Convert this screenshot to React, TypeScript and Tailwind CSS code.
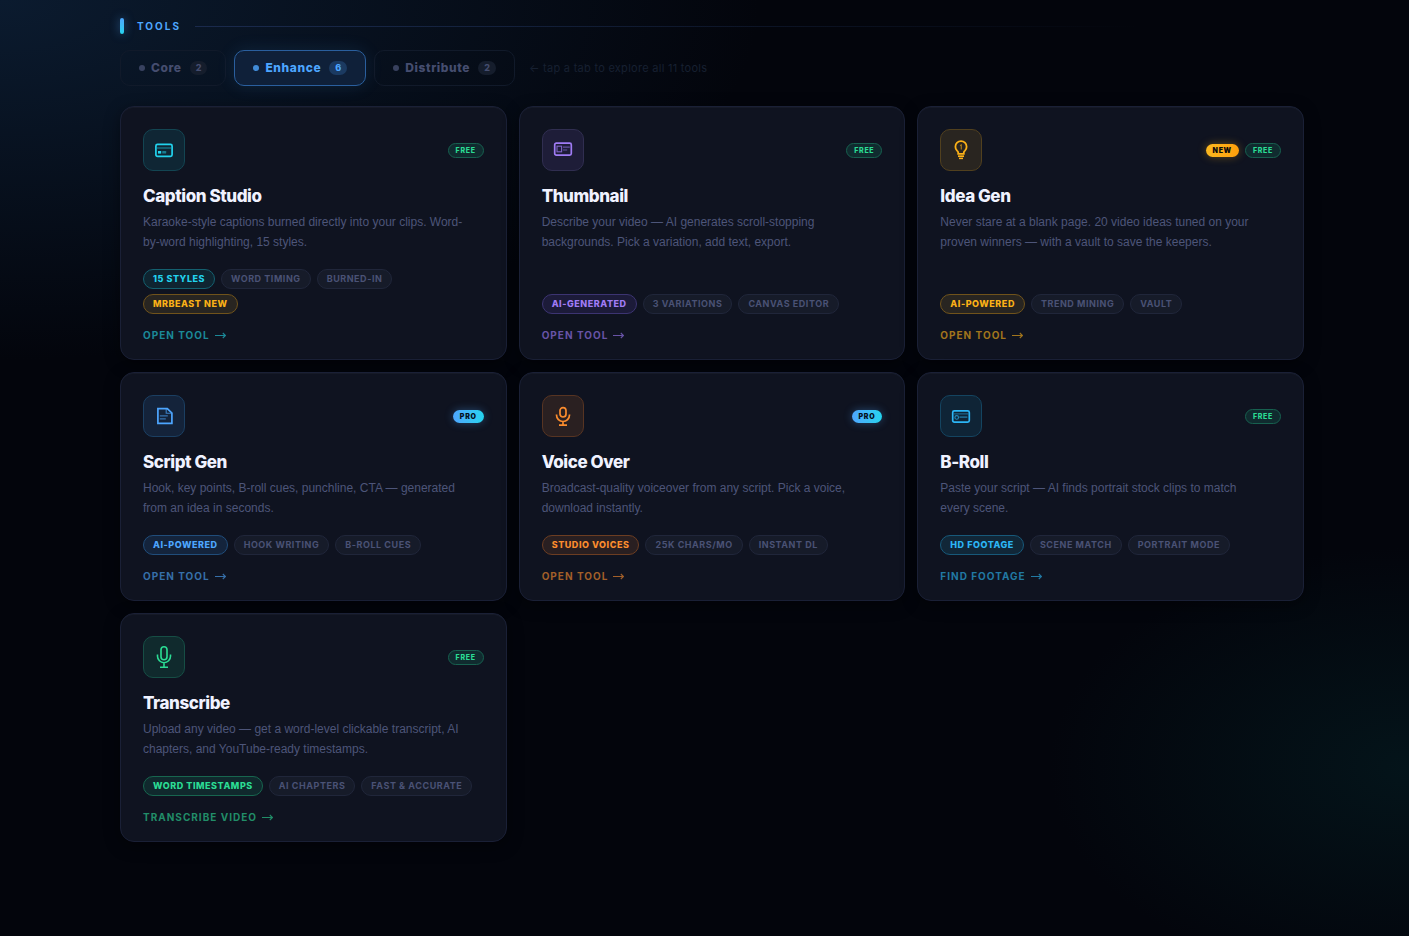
import React, { useState } from 'react';
import clsx from 'clsx';

type Tone = 'cyan' | 'violet' | 'amber' | 'blue' | 'orange' | 'sky' | 'green';
type Badge = 'NEW' | 'FREE' | 'PRO';

interface Tool {
  name: string;
  desc: string;
  tone: Tone;
  badges: Badge[];
  tags: { label: string; tone?: Tone }[];
  cta: string;
  icon: React.ReactNode;
}

const iconTone: Record<Tone, string> = {
  cyan: 'text-[#22d3ee] bg-[#0f2634] border-[#134552]',
  violet: 'text-[#a07cf5] bg-[#1e1d38] border-[#302e50]',
  amber: 'text-[#fbb117] bg-[#292520] border-[#51401e]',
  blue: 'text-[#4da6ff] bg-[#14233a] border-[#1b3f62]',
  orange: 'text-[#fb8c2e] bg-[#2a2021] border-[#573422]',
  sky: 'text-[#2cb5f5] bg-[#0f2436] border-[#144460]',
  green: 'text-[#2bdc94] bg-[#102a2d] border-[#164e45]',
};

const tagTone: Record<Tone, string> = {
  cyan: 'text-[#22d3ee] bg-[#0f2531] border-[#14606f]',
  violet: 'text-[#a07cf5] bg-[#1c1b39] border-[#3c3472]',
  amber: 'text-[#fbb117] bg-[#282521] border-[#70531b]',
  blue: 'text-[#4da6ff] bg-[#14243c] border-[#204d7b]',
  orange: 'text-[#fb8c2e] bg-[#291f21] border-[#6c3d22]',
  sky: 'text-[#2cb5f5] bg-[#112738] border-[#17597a]',
  green: 'text-[#2bdc94] bg-[#10292d] border-[#17664f]',
};

const linkTone: Record<Tone, string> = {
  cyan: 'text-[#1b8998]',
  violet: 'text-[#6853a6]',
  amber: 'text-[#a1751c]',
  blue: 'text-[#366fa9]',
  orange: 'text-[#a25f29]',
  sky: 'text-[#2179a3]',
  green: 'text-[#218d68]',
};

const badgeStyle: Record<Badge, string> = {
  NEW: 'px-[7px] py-[2px] font-black text-[#0a0a0a] bg-gradient-to-r from-[#fbb81f] to-[#ff9f0a] shadow-[0_0_8px_rgba(251,177,23,0.35)]',
  FREE: 'px-[7px] py-[2px] font-extrabold text-[#2bdc94] bg-[#102b2f] border border-[#17604f]',
  PRO: 'px-[7px] py-[2px] font-black text-[#04101c] bg-gradient-to-r from-[#4da6ff] to-[#22d3ee] shadow-[0_0_8px_rgba(77,166,255,0.35)]',
};

const Svg = ({ children }: { children: React.ReactNode }) => (
  <svg width="20" height="24" viewBox="0 0 20 24" fill="none" stroke="currentColor" strokeWidth="1.7" aria-hidden="true">
    {children}
  </svg>
);

const CaptionIcon = () => (
  <Svg>
    <rect x="1.9" y="6.4" width="16.2" height="12" rx="1.6" />
    <path d="M3 10h14" strokeWidth="1.4" opacity="0.45" />
    <rect x="4" y="13" width="3.2" height="2.6" fill="currentColor" stroke="none" />
    <rect x="8.2" y="13" width="4" height="2.6" rx="0.6" fill="currentColor" stroke="none" opacity="0.5" />
  </Svg>
);

const ThumbnailIcon = () => (
  <Svg>
    <rect x="1.7" y="5.2" width="16.6" height="12" rx="1.6" />
    <rect x="4" y="8.2" width="4.6" height="5.6" strokeWidth="1.1" opacity="0.75" />
    <path d="M10 9.2h6.8M10 12h4.2" strokeWidth="1.2" opacity="0.55" />
  </Svg>
);

const IdeaIcon = () => (
  <Svg>
    <path d="M7.2 15.8v-1.2c0-.8-.5-1.4-1.2-2a5.6 5.6 0 1 1 8 0c-.7.6-1.2 1.2-1.2 2v1.2z" strokeWidth="1.8" />
    <path d="M7 18.2h6" strokeWidth="1.7" />
    <path d="M8 20.4h4" strokeWidth="1.5" />
    <path d="M9 7.6l1.3-.6v4.6" strokeWidth="1.2" opacity="0.6" />
  </Svg>
);

const ScriptIcon = () => (
  <Svg>
    <path d="M3.9 4.6h9.4l4.6 4.4v10.4h-14z" />
    <path d="M12.2 4.6v4.7h5.6" strokeWidth="1.1" opacity="0.7" />
    <path d="M5.8 11.8h8M5.8 14.8h6" strokeWidth="1.2" opacity="0.6" />
  </Svg>
);

const VoiceIcon = () => (
  <Svg>
    <rect x="7" y="3.6" width="6" height="9.4" rx="3" />
    <path d="M3.5 10.4v.6a6.5 6.5 0 0 0 13 0v-.6M10 17.6v3.6M6 21.2h8" />
  </Svg>
);

const BRollIcon = () => (
  <Svg>
    <rect x="1.7" y="6.9" width="16.6" height="11.2" rx="1.6" />
    <path d="M2.8 9.9h14.4" strokeWidth="1.1" opacity="0.5" />
    <circle cx="5.7" cy="13.4" r="1.8" strokeWidth="1.1" opacity="0.7" />
    <path d="M8.4 13.1h8" strokeWidth="1.3" opacity="0.6" />
  </Svg>
);

const TranscribeIcon = () => (
  <Svg>
    <rect x="7" y="1.8" width="6" height="13" rx="3" strokeWidth="1.6" />
    <path d="M3.5 9.6v1.6a6.5 6.5 0 0 0 13 0V9.6M10 17.8v4.4M6 22.2h8" strokeWidth="1.6" />
  </Svg>
);

const tools: Tool[] = [
  {
    name: 'Caption Studio',
    desc: 'Karaoke-style captions burned directly into your clips. Word-by-word highlighting, 15 styles.',
    tone: 'cyan',
    badges: ['FREE'],
    tags: [{ label: '15 STYLES', tone: 'cyan' }, { label: 'WORD TIMING' }, { label: 'BURNED-IN' }, { label: 'MRBEAST NEW', tone: 'amber' }],
    cta: 'OPEN TOOL',
    icon: <CaptionIcon />,
  },
  {
    name: 'Thumbnail',
    desc: 'Describe your video — AI generates scroll-stopping backgrounds. Pick a variation, add text, export.',
    tone: 'violet',
    badges: ['FREE'],
    tags: [{ label: 'AI-GENERATED', tone: 'violet' }, { label: '3 VARIATIONS' }, { label: 'CANVAS EDITOR' }],
    cta: 'OPEN TOOL',
    icon: <ThumbnailIcon />,
  },
  {
    name: 'Idea Gen',
    desc: 'Never stare at a blank page. 20 video ideas tuned on your proven winners — with a vault to save the keepers.',
    tone: 'amber',
    badges: ['NEW', 'FREE'],
    tags: [{ label: 'AI-POWERED', tone: 'amber' }, { label: 'TREND MINING' }, { label: 'VAULT' }],
    cta: 'OPEN TOOL',
    icon: <IdeaIcon />,
  },
  {
    name: 'Script Gen',
    desc: 'Hook, key points, B-roll cues, punchline, CTA — generated from an idea in seconds.',
    tone: 'blue',
    badges: ['PRO'],
    tags: [{ label: 'AI-POWERED', tone: 'blue' }, { label: 'HOOK WRITING' }, { label: 'B-ROLL CUES' }],
    cta: 'OPEN TOOL',
    icon: <ScriptIcon />,
  },
  {
    name: 'Voice Over',
    desc: 'Broadcast-quality voiceover from any script. Pick a voice, download instantly.',
    tone: 'orange',
    badges: ['PRO'],
    tags: [{ label: 'STUDIO VOICES', tone: 'orange' }, { label: '25K CHARS/MO' }, { label: 'INSTANT DL' }],
    cta: 'OPEN TOOL',
    icon: <VoiceIcon />,
  },
  {
    name: 'B-Roll',
    desc: 'Paste your script — AI finds portrait stock clips to match every scene.',
    tone: 'sky',
    badges: ['FREE'],
    tags: [{ label: 'HD FOOTAGE', tone: 'sky' }, { label: 'SCENE MATCH' }, { label: 'PORTRAIT MODE' }],
    cta: 'FIND FOOTAGE',
    icon: <BRollIcon />,
  },
  {
    name: 'Transcribe',
    desc: 'Upload any video — get a word-level clickable transcript, AI chapters, and YouTube-ready timestamps.',
    tone: 'green',
    badges: ['FREE'],
    tags: [{ label: 'WORD TIMESTAMPS', tone: 'green' }, { label: 'AI CHAPTERS' }, { label: 'FAST & ACCURATE' }],
    cta: 'TRANSCRIBE VIDEO',
    icon: <TranscribeIcon />,
  },
];

const tabs = [
  { label: 'Core', count: 2 },
  { label: 'Enhance', count: 6 },
  { label: 'Distribute', count: 2 },
];

const ToolCard = ({ tool }: { tool: Tool }) => (
  <article className="flex flex-col rounded-[14px] border border-[#1a2036] bg-[#0f1320] px-[22px] pt-[22px] pb-4 shadow-[inset_0_1px_0_rgba(255,255,255,0.03),0_4px_16px_rgba(0,0,0,0.4)]">
    <div className="flex items-center justify-between">
      <div className={clsx('flex size-[42px] items-center justify-center rounded-[10px] border', iconTone[tool.tone])}>
        {tool.icon}
      </div>
      <div className="flex items-center gap-1.5">
        {tool.badges.map((b) => (
          <span key={b} className={clsx('rounded-full text-[7px] leading-[9px] tracking-widest', badgeStyle[b])}>
            {b}
          </span>
        ))}
      </div>
    </div>

    <h3 className="mt-[14px] text-[17px] leading-[22px] font-extrabold tracking-tight text-[#f0f2ff]">{tool.name}</h3>
    <p className="mt-[5px] pr-4 font-['Liberation_Sans',sans-serif] text-[12px] leading-5 text-[#4d5579]">{tool.desc}</p>

    <div className="mt-auto flex flex-wrap gap-x-[6px] gap-y-[5px] pt-[17px]">
      {tool.tags.map((t) => (
        <span
          key={t.label}
          className={clsx(
            'rounded-full border px-[9px] text-[9px] leading-[18px] tracking-[0.06em]',
            t.tone ? 'font-extrabold' : 'font-bold',
            t.tone ? tagTone[t.tone] : 'border-[#20263a] bg-[#161b29] text-[#4a5275]',
          )}
        >
          {t.label}
        </span>
      ))}
    </div>

    <a href="#" className={clsx('mt-[13px] flex w-fit items-center gap-[5px] text-[10px] leading-4 font-bold tracking-widest', linkTone[tool.tone])}>
      {tool.cta}
      <svg width="11" height="8" viewBox="0 0 11 8" fill="none" stroke="currentColor" strokeWidth="1.1" aria-hidden="true">
        <path d="M0 4.5h10.3M7.8 2l2.6 2.5L7.8 7" />
      </svg>
    </a>
  </article>
);

export default function App() {
  const [active, setActive] = useState('Enhance');

  return (
    <main className="min-h-screen bg-[#03050c] bg-[radial-gradient(ellipse_760px_360px_at_0%_0%,#0b1b2f_0%,transparent_100%),radial-gradient(ellipse_360px_220px_at_100%_82%,#04141a_0%,transparent_100%)] pt-[18px] pr-[105px] pb-10 pl-[120px] font-['Inter',sans-serif]">
      {/* Section header */}
      <div className="flex items-center">
        <span className="h-4 w-1 rounded-full bg-gradient-to-b from-[#4da6ff] to-[#22d3ee] shadow-[0_0_10px_rgba(77,166,255,0.5)]" />
        <h2 className="ml-[13px] text-[10px] leading-4 font-bold tracking-[0.2em] text-[#4da6ff]">TOOLS</h2>
        <span className="ml-[14px] h-px flex-1 bg-gradient-to-r from-[#1a2a4d] to-transparent to-85%" />
      </div>

      {/* Tabs */}
      <div className="mt-4 flex flex-wrap items-center gap-2" role="tablist">
        {tabs.map((tab) => {
          const on = tab.label === active;
          return (
            <button
              key={tab.label}
              type="button"
              role="tab"
              aria-selected={on}
              onClick={() => setActive(tab.label)}
              className={clsx(
                'flex h-9 items-center rounded-[10px] border px-[18px] text-[12px] font-extrabold tracking-wider',
                on
                  ? 'border-[#2a5f9e] bg-[#0f2039] text-[#4da6ff] shadow-[0_0_18px_rgba(77,166,255,0.12)]'
                  : 'border-[#111a2a] bg-transparent text-[#454d6f]',
              )}
            >
              <span className="mr-1.5 size-1.5 rounded-full bg-current opacity-80" />
              {tab.label}
              <span className={clsx('ml-2 rounded-full px-1.5 text-[9px] leading-[14px] tracking-normal', on ? 'bg-[#1b3a61]' : 'bg-[#151d2c]')}>
                {tab.count}
              </span>
            </button>
          );
        })}
        <span className="ml-1.5 text-[11px] tracking-wide text-[#172031]">← tap a tab to explore all 11 tools</span>
      </div>

      <section className="mt-5 grid grid-cols-1 gap-3 md:grid-cols-2 lg:grid-cols-3">
        {tools.map((tool) => (
          <ToolCard key={tool.name} tool={tool} />
        ))}
      </section>
    </main>
  );
}
